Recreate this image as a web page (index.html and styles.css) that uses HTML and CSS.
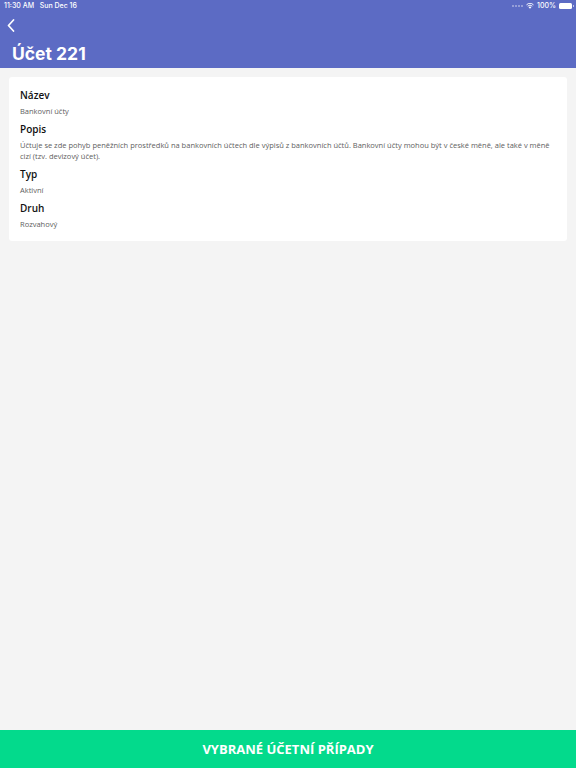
FILE: index.html
```html
<!DOCTYPE html>
<html lang="cs">
<head>
<meta charset="utf-8">
<title>Účet 221</title>
<link rel="stylesheet" href="styles.css">
</head>
<body>
<div class="app">
  <header class="header">
    <div class="status">
      <span class="status-left">11:30 AM&nbsp;&nbsp;&nbsp;Sun Dec 16</span>
      <span class="status-right">
        <span class="signal"><i></i><i></i><i></i><i></i></span>
        <svg class="wifi" width="8" height="6" viewBox="0 0 16 12"><path d="M8 11.5 L5.3 8.4 A4 4 0 0 1 10.7 8.4 Z" fill="#fff"/><path d="M3.4 6.3 A6.8 6.8 0 0 1 12.6 6.3" stroke="#fff" stroke-width="1.9" fill="none"/><path d="M1 3.7 A10.4 10.4 0 0 1 15 3.7" stroke="#fff" stroke-width="1.9" fill="none"/></svg>
        <span class="pct">100%</span>
        <span class="battery"><span class="battery-fill"></span></span>
      </span>
    </div>
    <div class="back">
      <svg width="8" height="13" viewBox="0 0 8 13"><polyline points="6.5,1 1.5,6.5 6.5,12" fill="none" stroke="#fff" stroke-width="1.7" stroke-linecap="round" stroke-linejoin="round"/></svg>
    </div>
    <h1 class="title">Účet 221</h1>
  </header>
  <main class="content">
    <section class="card">
      <div class="field">
        <div class="label">Název</div>
        <div class="value">Bankovní účty</div>
      </div>
      <div class="field">
        <div class="label">Popis</div>
        <div class="value">Účtuje se zde pohyb peněžních prostředků na bankovních účtech dle výpisů z bankovních účtů. Bankovní účty mohou být v české měně, ale také v měně cizí (tzv. devizový účet).</div>
      </div>
      <div class="field">
        <div class="label">Typ</div>
        <div class="value">Aktivní</div>
      </div>
      <div class="field">
        <div class="label">Druh</div>
        <div class="value">Rozvahový</div>
      </div>
    </section>
  </main>
  <button class="action" type="button">VYBRANÉ ÚČETNÍ PŘÍPADY</button>
</div>
</body>
</html>
```
FILE: styles.css
```css
* { box-sizing: border-box; }
html, body { margin: 0; padding: 0; }
body {
  background: #f4f4f4;
  font-family: "Open Sans", "Noto Sans", sans-serif;
}
.app {
  display: flex;
  flex-direction: column;
  min-height: 768px;
}
.header {
  background: #5c6bc4;
  height: 68px;
  color: #fff;
  display: flex;
  flex-direction: column;
}
.status {
  height: 12px;
  padding: 0 4px;
  display: flex;
  justify-content: space-between;
  align-items: center;
  font-family: Inter, "Liberation Sans", sans-serif;
  font-size: 7px;
  font-weight: 500;
  line-height: 12px;
}
.status-right {
  display: flex;
  align-items: center;
}
.signal {
  display: flex;
  gap: 1px;
  margin-right: 3px;
}
.signal i {
  width: 2px;
  height: 1.5px;
  background: rgba(255,255,255,0.35);
  display: block;
}
.wifi { margin-right: 3px; }
.pct { margin-right: 3px; }
.battery {
  width: 13px;
  height: 6px;
  border-radius: 1.5px;
  background: #fff;
  display: block;
  position: relative;
}
.battery::after {
  content: "";
  position: absolute;
  right: -1.5px;
  top: 2px;
  width: 1px;
  height: 2px;
  background: rgba(255,255,255,0.6);
}
.back {
  height: 22px;
  padding: 4px 0 0 7px;
  display: flex;
  align-items: center;
}
.back svg { display: block; }
.title {
  margin: 8.5px 0 0 12px;
  font-family: Inter, "Liberation Sans", sans-serif;
  font-weight: 700;
  font-size: 17.5px;
  line-height: 22px;
  letter-spacing: 0;
}
.content {
  flex: 1;
  padding: 9px;
}
.card {
  background: #fff;
  border-radius: 3px;
  padding: 11.5px 11px 11px;
  display: flex;
  flex-direction: column;
  gap: 5.5px;
}
.label {
  font-size: 10px;
  line-height: 13px;
  font-weight: 600;
  color: #111;
}
.value {
  margin-top: 4.5px;
  font-size: 7.5px;
  line-height: 11px;
  color: #606060;
}
.action {
  height: 38px;
  border: 0;
  margin: 0;
  background: #03da8c;
  color: #fff;
  font-family: "Open Sans", "Noto Sans", sans-serif;
  font-weight: 700;
  font-size: 13px;
  letter-spacing: 0;
  width: 100%;
  padding: 0;
}
```
